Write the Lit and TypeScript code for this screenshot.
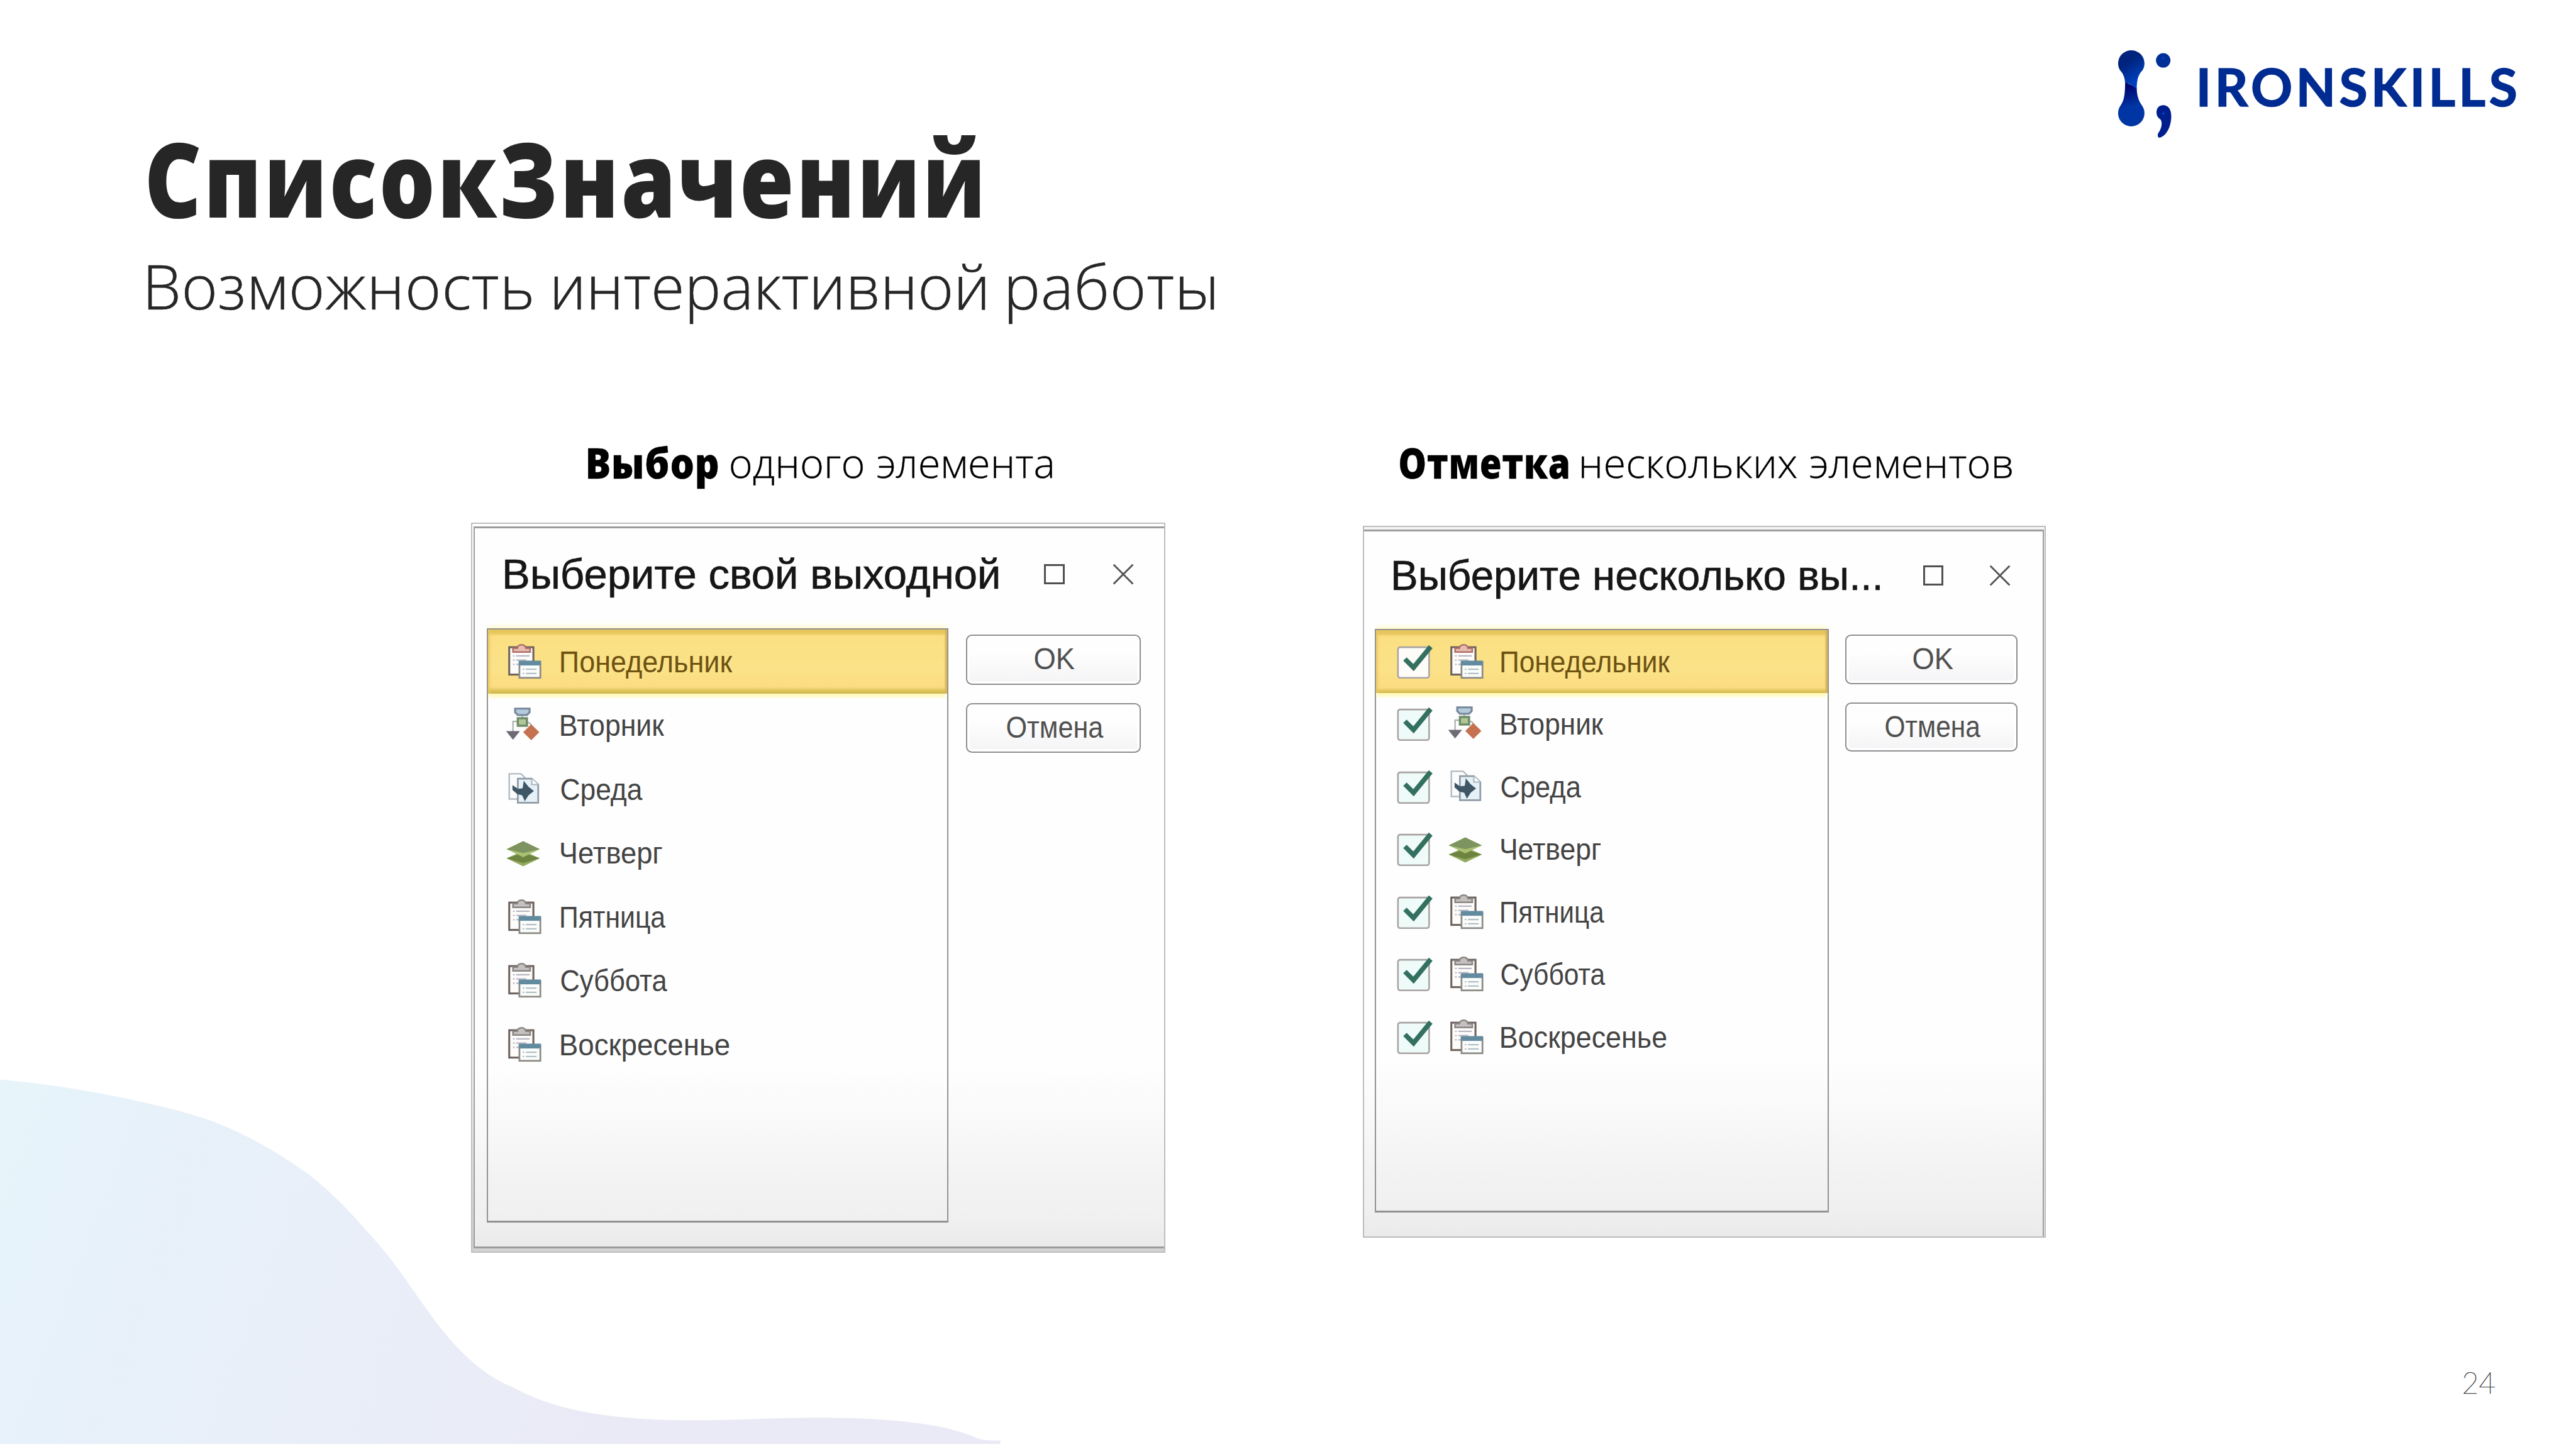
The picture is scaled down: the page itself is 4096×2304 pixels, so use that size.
import { LitElement, html, svg, css, nothing } from "lit";
import { customElement, property } from "lit/decorators.js";

const UI = '"Liberation Sans", Arial, sans-serif';
const SLIDE = '"Open Sans", "Noto Sans", sans-serif';
const BRAND = 'Lato, "Open Sans", sans-serif';

const ruler = document.createElement("canvas").getContext("2d")!;

/**
 * One line of text whose ink is exactly `width` wide: short text is tracked
 * out, long text is condensed. `track` is the spacing kept when condensing.
 */
@customElement("fit-text")
class FitText extends LitElement {
  @property() text = "";
  @property({ type: Number }) width = 100;
  @property({ type: Number }) size = 16;
  @property({ type: Number }) weight = 400;
  @property({ type: Number }) track = 0;
  @property() family = UI;

  static styles = css`
    :host { display: block; flex: none; white-space: pre; }
    .line { display: block; transform-origin: 0 50%; }
  `;

  render() {
    ruler.font = `${this.weight} ${this.size}px ${this.family}`;
    const m = ruler.measureText(this.text);
    const gaps = Math.max(1, [...this.text].length - 1);
    const ink = m.actualBoundingBoxLeft + m.actualBoundingBoxRight;
    const wide = ink + this.track * gaps;
    const track = wide > this.width ? this.track : (this.width - ink) / gaps;
    const scale = Math.min(1, this.width / wide);
    return html`<span
      class="line"
      style="width:${this.width}px;font:${this.weight} ${this.size}px ${this.family};line-height:inherit;letter-spacing:${track.toFixed(3)}px;text-indent:${m.actualBoundingBoxLeft.toFixed(2)}px;transform:scaleX(${scale.toFixed(4)})"
      >${this.text}</span>`;
  }
}

type IconName = "plan" | "planRed" | "flow" | "copy" | "layers";

const clipboard = (clip: string, clipFill: string) => svg`
  <rect x="2" y="6" width="45" height="51" fill="#fdfcfa" stroke="#6d625c" stroke-width="3.6"/>
  <path d="M9 15V8H17Q18 1.5 25 1.5Q32 1.5 33 8H41V15Z" fill="${clipFill}" stroke="${clip}" stroke-width="3"/>
  <path d="M9 22H40M9 30H34M9 38H20" stroke="#b9b6c4" stroke-width="2.6" stroke-dasharray="3 3 40 0"/>
  <rect x="21" y="34" width="39" height="29" fill="#fbfdfd" stroke="#8c8a84" stroke-width="3.2"/>
  <rect x="20" y="31" width="41" height="9" fill="#638ba0"/>
  <path d="M27 47H53M27 55H53" stroke="#b4c0c4" stroke-width="2.8" stroke-dasharray="3 3 30 0"/>`;

const ICONS: Record<IconName, unknown> = {
  plan: clipboard("#8a8684", "#c4c1c0"),
  planRed: clipboard("#b06f66", "#e6bdb5"),
  flow: svg`
    <path d="M26 15V20M17 26H9V46M36 28Q43 28 43 36" fill="none" stroke="#a9b3a8" stroke-width="2.6"/>
    <path d="M13 2H40V9L35 14H18L13 9Z" fill="#b4cbdc" stroke="#76879a" stroke-width="3.6"/>
    <rect x="18" y="20" width="17" height="14" fill="#b3c796" stroke="#6d8a68" stroke-width="4"/>
    <path d="M-4 44H22L9 60Z" fill="#6f6a75"/>
    <path d="M43 31L58 46L43 61L28 46Z" fill="#c4724f"/>`,
  copy: svg`
    <path d="M2 4H24L31 11V51H2Z" fill="#fbfcfd" stroke="#b4bac0" stroke-width="2.8"/>
    <path d="M18 13H44L56 24V58H18Z" fill="#e6f0f7" stroke="#8f9ba6" stroke-width="3.2"/>
    <path d="M44 13V24H56" fill="#fff" stroke="#a7b4bd" stroke-width="2.4"/>
    <path d="M8 25L18 32L27 31L29 17L38 28L48 36L38 44L31 55L26 44L17 42L8 34Z" fill="#3f5666"/>`,
  layers: svg`
    <path d="M-3 43L28 29L59 43L28 58Z" fill="#93ab5e"/>
    <path d="M-3 43L28 33L59 43L28 52Z" fill="#6c8440"/>
    <path d="M-3 26L28 11L59 26L28 41Z" fill="#a9c070"/>
    <path d="M-3 26L28 11L59 26L28 33Z" fill="#7d9460"/>`,
};

interface Item { label: string; icon: IconName; width: number; }

@customElement("choice-dialog")
class ChoiceDialog extends LitElement {
  @property() heading = "";
  @property({ type: Number }) headingWidth = 900;
  @property({ type: Boolean }) multi = false;
  @property({ attribute: false }) items: Item[] = [];

  static styles = css`
    :host { display: block; }
    * { box-sizing: border-box; }
    .frame {
      width: 1294px; height: 1360px; border: 3px solid #bdbdbd; padding: 5px 0 5px 2px;
      background: linear-gradient(#fff 70%, #d3d3d3 99%);
    }
    .window {
      height: 100%; border-style: solid; border-color: #9c9c9c; border-width: 4px 0 4px 3px;
      background: linear-gradient(#fefefe 0 75%, #f8f8f8 84%, #f3f3f3 90%, #f0f0f0 96%, #eaeaea 100%);
    }
    .bar { display: flex; align-items: center; height: 186px; padding: 0 0 16px 56px; line-height: 100px; color: #161616; }
    .heading { -webkit-text-stroke: 0.8px #161616; }
    .max { width: 38px; height: 38px; border: 4px solid #505050; margin-left: 86px; flex: none; }
    .close { width: 40px; height: 40px; margin-left: 89px; flex: none; }
    .body { display: flex; align-items: flex-start; padding-left: 22px; }
    .list {
      width: 860px; height: 1107px; border: 3px solid #929292; border-bottom-width: 4px; flex: none;
      box-shadow: 0 -9px 7px -4px #fffacd;
    }
    .row { display: flex; align-items: center; height: 119px; padding-left: 38px; line-height: 80px; color: #444; }
    .row.on {
      color: #6d5212;
      background: linear-gradient(#e6c35b 0, #e9c860 7px, #fbdf82 12px, #fbe288 60%, #fcdc82 107px, #dcc358 114px, #cdb455);
      box-shadow: inset -5px 0 2px -1px #d9b659, inset 5px 0 5px -2px #eec863, 0 9px 4px -2px #fffaba;
    }
    .check { width: 64px; height: 66px; margin-right: 35px; flex: none; overflow: visible; }
    .icon { width: 62px; height: 66px; margin-right: 36px; flex: none; overflow: visible; }
    .buttons { display: flex; flex-direction: column; gap: 34px; margin: 12px 0 0 33px; }
    .button {
      display: flex; justify-content: center; width: 326px; height: 93px; padding-left: 6px; border: 3px solid #8e8e8e; border-radius: 11px;
      background: linear-gradient(#fefefe 35%, #f4f4f6); box-shadow: inset 0 0 0 4px #fff; line-height: 86px; color: #505050;
    }
    .frame.multi { width: 1273px; height: 1326px; padding: 4px 1px 0 0; background: #f4f4f4; }
    .multi .window { border-width: 4px 3px 0 0; }
    .multi .bar { height: 182px; padding-bottom: 17px; }
    .multi .max { margin-left: 80px; }
    .multi .close { margin-left: 85px; }
    .multi .body { padding-left: 20px; }
    .multi .list { width: 846px; height: 1087px; }
    .multi .row { height: 116.7px; padding-left: 40px; }
    .multi .icon { margin-right: 33px; }
    .multi .buttons { margin: 11px 0 0 31px; }
    .multi .button { width: 321px; height: 92px; }
  `;

  render() {
    return html`
      <div class="frame ${this.multi ? "multi" : ""}">
        <div class="window">
          <div class="bar">
            <fit-text class="heading" .text=${this.heading} .width=${this.headingWidth} .size=${79}></fit-text>
            <div class="max"></div>
            <svg class="close" viewBox="0 0 40 40"><path d="M2 2L38 38M38 2L2 38" stroke="#555" stroke-width="3.4"/></svg>
          </div>
          <div class="body">
            <div class="list">
              ${this.items.map(
                (item, i) => html`<div class="row ${i === 0 ? "on" : ""}">
                  ${this.multi
                    ? html`<svg class="check" viewBox="0 0 64 66">
                        <rect x="1" y="6" width="58" height="57" rx="4" fill=${i === 0 ? "#fdfcf8" : "#effbf8"} stroke="#a9a3a3" stroke-width="3"/>
                        <path d="M14 28L30 44L62 5" fill="none" stroke="#33705f" stroke-width="9"/>
                      </svg>`
                    : nothing}
                  <svg class="icon" viewBox="0 0 62 66">${ICONS[item.icon]}</svg>
                  <fit-text .text=${item.label} .width=${item.width} .size=${57}></fit-text>
                </div>`
              )}
            </div>
            <div class="buttons">
              <div class="button"><fit-text text="OK" .width=${75} .size=${57}></fit-text></div>
              <div class="button"><fit-text text="Отмена" .width=${this.multi ? 177 : 180} .size=${57}></fit-text></div>
            </div>
          </div>
        </div>
      </div>`;
  }
}

const DAYS: [string, IconName, number, number][] = [
  ["Понедельник", "planRed", 320, 315],
  ["Вторник", "flow", 193, 191],
  ["Среда", "copy", 152, 149],
  ["Четверг", "layers", 189, 186],
  ["Пятница", "plan", 195, 192],
  ["Суббота", "plan", 198, 194],
  ["Воскресенье", "plan", 314, 308],
];

@customElement("app-root")
class AppRoot extends LitElement {
  static styles = css`
    :host { display: block; width: 4096px; height: 2304px; overflow: hidden; background: #fff; }
    * { box-sizing: border-box; }
    .slide { position: relative; zoom: 0.8533333; width: 4800px; height: 2700px; overflow: hidden; }
    .wave { position: absolute; left: 0; bottom: 9px; width: 1866px; height: 691px; }
    .content { position: relative; display: flex; flex-direction: column; height: 100%; }
    .header { display: flex; justify-content: space-between; align-items: flex-start; height: 805px; padding: 0 112px 0 276px; color: #262626; }
    .titles { padding-top: 211px; }
    .title { line-height: 240px; }
    .subtitle { display: flex; margin-top: 6px; line-height: 150px; -webkit-text-stroke: 0.7px #262626; }
    .subtitle fit-text + fit-text { margin-left: 44px; }
    .logo { display: flex; gap: 44px; padding-top: 85px; color: #002c92; }
    .mark { width: 115px; height: 180px; }
    .brand { margin-top: 16px; line-height: 120px; -webkit-text-stroke: 1.8px #002c92; }
    .main { display: flex; align-items: flex-start; height: 1736px; padding-left: 878px; gap: 367px; }
    .column { display: flex; flex-direction: column; gap: 59px; width: 1294px; }
    .column.second { gap: 65px; width: 1273px; }
    .caption { display: flex; gap: 24px; padding-left: 218px; line-height: 113px; height: 110px; color: #000; -webkit-text-stroke: 0.4px #000; }
    .second .caption { padding-left: 70px; }
    .footer { display: flex; justify-content: flex-end; padding-right: 151px; line-height: 70px; color: #3b3b3b; }
    .number { -webkit-text-stroke: 0.7px #3b3b3b; }
  `;

  render() {
    return html`
      <div class="slide">
        <svg class="wave" viewBox="0 2000 1866 691">
          <defs>
            <linearGradient id="sky" gradientUnits="userSpaceOnUse" x1="0" y1="2090" x2="1260" y2="2560">
              <stop offset="0" stop-color="#e7f4fa"/>
              <stop offset=".2" stop-color="#e7f1fa"/>
              <stop offset=".5" stop-color="#e9eff9"/>
              <stop offset="1" stop-color="#eae9f6"/>
            </linearGradient>
          </defs>
          <path fill="url(#sky)" d="M0 2011C120 2022 225 2042 319 2066C362 2077 393 2087 421 2099C480 2124 532 2157 574 2187C630 2230 665 2273 702 2314C745 2362 785 2430 829 2484C862 2524 905 2565 957 2585C1005 2612 1060 2626 1110 2634C1200 2649 1310 2647 1403 2644C1460 2642 1510 2641 1556 2641.500C1630 2642 1690 2648 1735 2655C1770 2661 1800 2670 1824 2681C1838 2684 1850 2684 1864 2684V2691H0Z"/>
        </svg>
        <div class="content">
          <div class="header">
            <div class="titles">
              <fit-text class="title" text="СписокЗначений" .width=${1550} .size=${194} .weight=${800} .track=${5} .family=${SLIDE}></fit-text>
              <div class="subtitle">
                <fit-text text="Возможность" .width=${714} .size=${115} .weight=${300} .family=${SLIDE}></fit-text>
                <fit-text text="интерактивной" .width=${802} .size=${115} .weight=${300} .family=${SLIDE}></fit-text>
                <fit-text text="работы" .width=${382} .size=${115} .weight=${300} .family=${SLIDE}></fit-text>
              </div>
            </div>
            <div class="logo">
              <svg class="mark" viewBox="3940 85 115 180">
                <defs>
                  <linearGradient id="top" gradientUnits="userSpaceOnUse" x1="3955" y1="110" x2="3984" y2="152">
                    <stop offset=".2" stop-color="#00247d"/><stop offset="1" stop-color="#0042c4"/>
                  </linearGradient>
                  <linearGradient id="low" gradientUnits="userSpaceOnUse" x1="3968" y1="160" x2="3980" y2="200">
                    <stop offset="0" stop-color="#000670"/><stop offset=".9" stop-color="#0036a4"/>
                  </linearGradient>
                </defs>
                <path fill="url(#low)" d="M3960 152C3960 180 3957 188 3951 197A24.500 24.500 0 1 0 3992 197C3985 187 3982 178 3981.500 163Z"/>
                <path fill="url(#top)" d="M3960 153C3959 143 3956 136 3951 131A24.500 24.500 0 1 1 3992 131C3984 139 3982 148 3981.500 166C3975 159 3968 155 3960 153Z"/>
                <circle cx="4031" cy="112" r="13.500" fill="#003097"/>
                <path fill="#001f8c" d="M4018.500 209C4018.500 200 4024 195.500 4031 195.500C4040 195.500 4046 203 4046 216C4046 234 4038 252 4025 256C4020 256 4020 251 4022 247C4028 239 4030 228 4026 222C4021 219 4018.500 215 4018.500 209Z"/>
                <circle cx="4031" cy="108" r="2.500" fill="#0042c4"/>
                <circle cx="4031" cy="211" r="2.500" fill="#0042c4"/>
              </svg>
              <fit-text class="brand" text="IRONSKILLS" .width=${589} .size=${96} .weight=${700} .family=${BRAND}></fit-text>
            </div>
          </div>
          <div class="main">
            <div class="column">
              <div class="caption">
                <fit-text text="Выбор" .width=${242} .size=${79} .weight=${800} .track=${1} .family=${SLIDE}></fit-text>
                <fit-text text="одного элемента" .width=${599} .size=${76} .weight=${300} .family=${SLIDE}></fit-text>
              </div>
              <choice-dialog
                heading="Выберите свой выходной"
                .headingWidth=${919}
                .items=${DAYS.map(([label, icon, width]) => ({ label, icon, width }))}
              ></choice-dialog>
            </div>
            <div class="column second">
              <div class="caption">
                <fit-text text="Отметка" .width=${314} .size=${79} .weight=${800} .track=${1} .family=${SLIDE}></fit-text>
                <fit-text text="нескольких элементов" .width=${802} .size=${76} .weight=${300} .family=${SLIDE}></fit-text>
              </div>
              <choice-dialog
                multi
                heading="Выберите несколько вы..."
                .headingWidth=${906}
                .items=${DAYS.map(([label, icon, , width]) => ({ label, icon, width }))}
              ></choice-dialog>
            </div>
          </div>
          <div class="footer">
            <fit-text class="number" text="24" .width=${59} .size=${57} .weight=${100} .family=${BRAND}></fit-text>
          </div>
        </div>
      </div>`;
  }
}
